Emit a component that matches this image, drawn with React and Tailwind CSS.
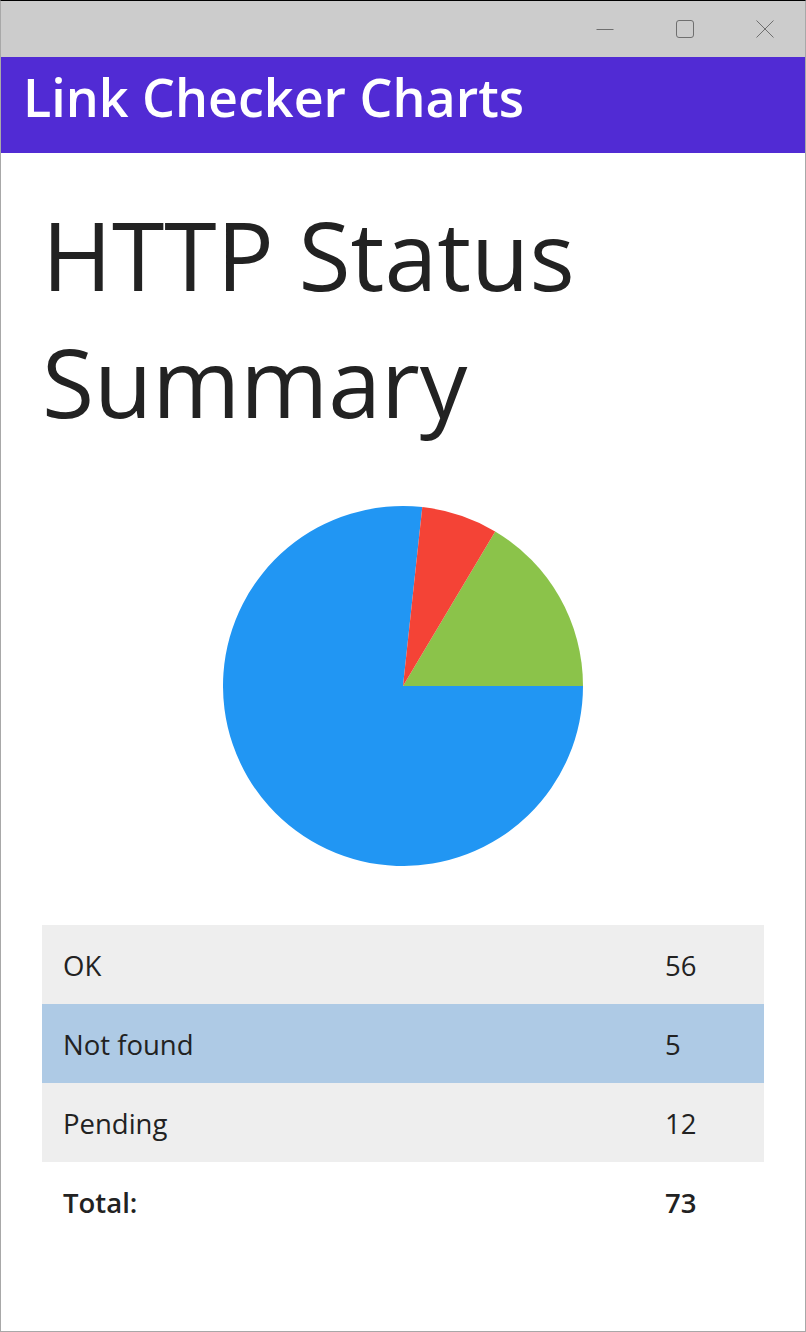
import React from 'react';

const rows = [
  { label: 'OK', value: 56, bg: 'bg-[#eeeeee]' },
  { label: 'Not found', value: 5, bg: 'bg-[#aecae5]' },
  { label: 'Pending', value: 12, bg: 'bg-[#eeeeee]' },
];

function PieChart() {
  return (
    <svg width="360" height="360" viewBox="0 0 360 360">
      <path d="M180,180 L199.3,1.04 A180,180 0 1 0 360,180 Z" fill="#2196F3" />
      <path d="M180,180 L360,180 A180,180 0 0 0 272.2,25.4 Z" fill="#8BC34A" />
      <path d="M180,180 L272.2,25.4 A180,180 0 0 0 199.3,1.04 Z" fill="#F44336" />
    </svg>
  );
}

function TitleBar() {
  return (
    <div className="h-[56px] bg-[#cccccc] flex justify-end items-center">
      <div className="w-[80px] flex justify-center">
        <svg width="18" height="18" viewBox="0 0 18 18">
          <path d="M0.5,9.5 H17.5" stroke="#6f6f6f" strokeWidth="1" />
        </svg>
      </div>
      <div className="w-[80px] flex justify-center">
        <svg width="18" height="18" viewBox="0 0 18 18">
          <rect x="0.5" y="0.5" width="17" height="17" rx="2.5" fill="none" stroke="#6f6f6f" strokeWidth="1" />
        </svg>
      </div>
      <div className="w-[80px] flex justify-center">
        <svg width="18" height="18" viewBox="0 0 18 18">
          <path d="M0.5,0.5 L17.5,17.5 M17.5,0.5 L0.5,17.5" stroke="#6f6f6f" strokeWidth="1" />
        </svg>
      </div>
    </div>
  );
}

export default function App() {
  return (
    <div
      className="w-[806px] h-[1332px] flex flex-col bg-white border border-[#a8a8a8] border-t-black overflow-hidden"
      style={{ fontFamily: '"Open Sans", "Noto Sans", sans-serif' }}
    >
      <TitleBar />
      <header className="h-[96px] bg-[#512bd4] pl-[22px] pt-[2px]">
        <h1 className="text-[52px] leading-[76px] font-semibold text-white">Link Checker Charts</h1>
      </header>

      <main className="flex flex-col px-[41px] pt-[38px]">
        <h2 className="text-[95px] leading-[127px] font-normal text-[#222222]">HTTP Status Summary</h2>

        <div className="flex justify-center mt-[61px]">
          <PieChart />
        </div>

        <div className="mt-[59px] flex flex-col text-[27.5px] text-[#222222]">
          {rows.map((row) => (
            <div key={row.label} className={`h-[79px] pt-[3px] flex items-center ${row.bg}`}>
              <div className="flex-1 pl-[21px]">{row.label}</div>
              <div className="w-[121px] pl-[22px]">{row.value}</div>
            </div>
          ))}
          <div className="h-[79px] pt-[3px] flex items-center font-semibold">
            <div className="flex-1 pl-[21px]">Total:</div>
            <div className="w-[121px] pl-[22px]">73</div>
          </div>
        </div>
      </main>
    </div>
  );
}
